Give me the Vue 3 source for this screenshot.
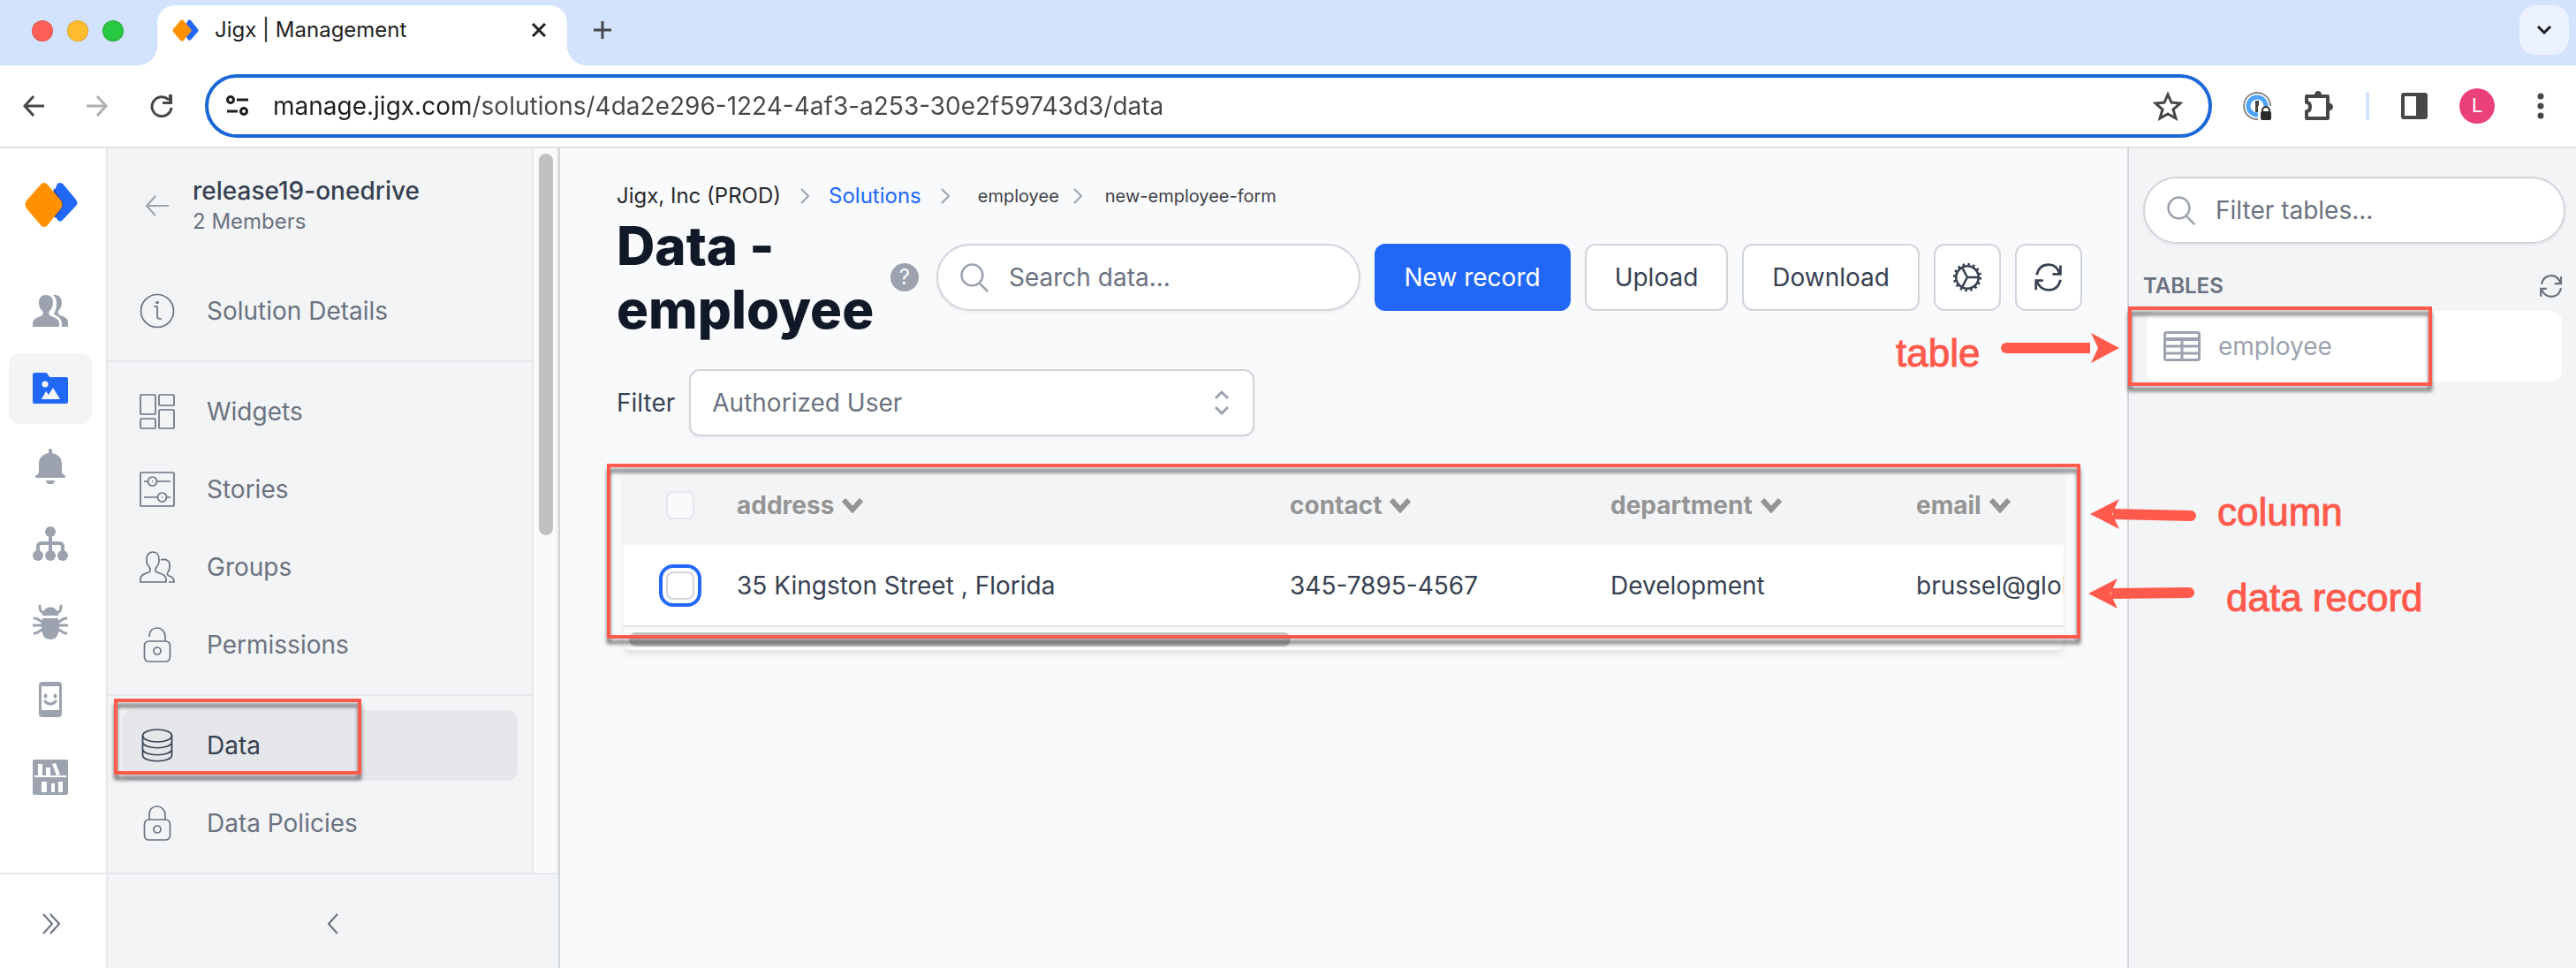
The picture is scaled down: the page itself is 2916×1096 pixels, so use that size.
<script setup>
import { ref } from 'vue'

const address = ref('manage.jigx.com/solutions/4da2e296-1224-4af3-a253-30e2f59743d3/data')
const search = ref('')
const tableFilter = ref('')
const userFilter = ref('Authorized User')

const art = {
  users:
    '<path d="M0 38v-3c0-5 3-7 9-9 3-1 3-4 2-6-3-2-4-6-4-10 0-5 3-8 8-8s8 3 8 8c0 4-1 8-4 10-1 2-1 5 2 6 6 2 9 4 9 9v3z"/><path d="M23 2c6-1 10 3 10 9 0 4-2 7-4 9-1 2 0 4 2 5 6 2 9 4 9 8v5h-7c0-8-1-10-9-14 0-2 3-5 3-12 0-4-1-8-4-10z"/>',
  folder:
    '<path d="M2 2h13c2 0 3 5 5 5h18a2 2 0 0 1 2 2v26a2 2 0 0 1-2 2H2a2 2 0 0 1-2-2V4a2 2 0 0 1 2-2z"/><g fill="#f3f4f6"><circle cx="14" cy="15" r="3.5"/><path d="M10 32l5-9 3 4 5-8 8 13z"/></g>',
  bell:
    '<path d="M18 2a2 2 0 0 1 4 0v3c7 1 11 6 11 12v8c0 3 1 4 3 5s1 3 0 3H4c-1 0-2-2 0-3s3-2 3-5v-8C7 11 11 6 18 5zM15 36h10c0 6-10 6-10 0z"/>',
  org:
    '<circle cx="20" cy="6" r="6"/><circle cx="6" cy="33" r="6"/><circle cx="20" cy="33" r="6"/><circle cx="34" cy="33" r="6"/><path fill="none" stroke="currentColor" stroke-width="4" d="M20 8v22M6 30v-7q0-4 4-4h20q4 0 4 4v7"/>',
  bug:
    '<path d="M11 11c2-10 16-10 18 0v2H11zM11 16h18c2 10 2 24-9 24s-11-14-9-24z"/><path fill="none" stroke="currentColor" stroke-width="3" stroke-linecap="round" d="M8 2c0 5 1 7 5 8M32 2c0 5-1 7-5 8M2 16c6 0 6 5 11 5M38 16c-6 0-6 5-11 5M1 24h38M2 33c6 0 5-4 11-5M38 33c-6 0-5-4-11-5"/>',
  phone:
    '<path fill-rule="evenodd" d="M11 0h18a4 4 0 0 1 4 4v32a4 4 0 0 1-4 4H11a4 4 0 0 1-4-4V4a4 4 0 0 1 4-4zM10 5v27h20V5z"/><ellipse cx="14.500" cy="16" rx="2" ry="2.500"/><ellipse cx="25.500" cy="16" rx="2" ry="2.500"/><path fill="none" stroke="currentColor" stroke-width="3" stroke-linecap="round" d="M14 22c3 4 9 4 12 0"/>',
  shelf:
    '<rect width="40" height="40" rx="2"/><g fill="#fff"><path d="M2 18h36v2H2zM6 5h5v13H6zM15 9h5v9h-5zM22 5l4-1 5 13-4 1zM10 25h6v12h-6zM21 27h4v10h-4zM29 25h5v12h-5z"/></g>',
  info:
    '<circle cx="20" cy="20" r="18.500"/><path d="M16 15h4v11q0 3 3 3h2M19 10h2v1h-2z"/>',
  widgets:
    '<rect x="1" y="1" width="17" height="22" rx="1"/><rect x="1" y="28" width="17" height="11" rx="1"/><rect x="22" y="1" width="17" height="12" rx="1"/><rect x="22" y="18" width="17" height="21" rx="1"/>',
  stories:
    '<rect x="1" y="1" width="38" height="38" rx="1"/><circle cx="14.500" cy="11" r="5"/><circle cx="25.500" cy="29" r="5"/><path d="M5 11h5M20 11h15M5 29h15M31 29h4"/><path d="M14 11h1M25 29h1"/>',
  groups:
    '<path d="M1 37v-3c0-5 4-6 9-8 3-1 2-4 1-6-3-3-3-5-3-9 0-5 3-8 7-8s7 3 7 8c0 4 0 6-3 9-1 2-2 5 1 6 5 2 10 3 10 8v3zM24 12c6-2 11 1 10 8 0 3-1 5-2 6-1 2-1 3 1 4 4 1 6 3 6 6v1h-6"/>',
  unlock:
    '<rect x="5.500" y="16" width="29" height="23" rx="5"/><circle cx="20" cy="27" r="4"/><path d="M11 11C11 4 15 1 20 1s9 4 9 10v5"/>',
  lock:
    '<rect x="5.500" y="16" width="29" height="23" rx="5"/><circle cx="20" cy="27" r="4"/><path d="M11 16v-5C11 4 15 1 20 1s9 4 9 10v5"/>',
  data:
    '<ellipse cx="20" cy="9" rx="16.500" ry="7"/><path d="M3.500 9v22c0 9 33 9 33 0V9M3.500 16c0 9 33 9 33 0M3.500 24c0 9 33 9 33 0"/>',
  refresh:
    '<path d="M4 16C6 7 12 3 19 3c7 0 12 4 14 12M34 4v11H24M34 22c-2 9-8 13-15 13C12 35 7 31 4 24M3 35V23h9"/>',
  gear:
    '<circle cx="20" cy="20" r="15"/><circle cx="20" cy="20" r="17.500" stroke-dasharray="3 3.870"/><path d="M20 20h14M20 20l-7-13M20 20l-7 13"/>',
  search: '<circle cx="17" cy="17" r="14"/><path d="M27 28l11 11"/>',
}

const rail = [
  { name: 'Users', icon: 'users' },
  { name: 'Solutions', icon: 'folder', active: true },
  { name: 'Notifications', icon: 'bell' },
  { name: 'Organization', icon: 'org' },
  { name: 'Debug', icon: 'bug' },
  { name: 'Devices', icon: 'phone' },
  { name: 'Library', icon: 'shelf' },
]

const sections = [
  [{ name: 'Solution Details', icon: 'info' }],
  [
    { name: 'Widgets', icon: 'widgets' },
    { name: 'Stories', icon: 'stories' },
    { name: 'Groups', icon: 'groups' },
    { name: 'Permissions', icon: 'unlock' },
  ],
  [
    { name: 'Data', icon: 'data', active: true },
    { name: 'Data Policies', icon: 'lock' },
  ],
]

const columns = ['address', 'contact', 'department', 'email']
const rows = [['35 Kingston Street , Florida', '345-7895-4567', 'Development', 'brussel@global.com']]
</script>

<template>
  <div class="window">
    <header class="tabstrip">
      <div class="lights"><i class="red"></i><i class="yellow"></i><i class="green"></i></div>
      <div class="tab">
        <svg class="favicon" viewBox="0 0 60 50" aria-hidden="true">
          <path fill="#2268f7" d="M36 2q3-3 6 0l16 20q2 3 0 6L42 46q-3 3-6 0L22 25z" />
          <path fill="#ff9000" d="M19 2q3-3 6 0l17 20q2 3 0 6L25 48q-3 3-6 0L2 28q-2-3 0-6z" />
        </svg>
        <span class="tab-title">Jigx | Management</span>
        <button class="bare" aria-label="Close tab">
          <svg width="16" height="16" viewBox="0 0 16 16"><path d="M1 1l14 14M15 1L1 15" stroke="#1f1f1f" stroke-width="3" /></svg>
        </button>
      </div>
      <button class="bare newtab" aria-label="New tab">
        <svg width="20" height="20" viewBox="0 0 20 20"><path d="M10 0v20M0 10h20" stroke="#474747" stroke-width="3" /></svg>
      </button>
      <button class="bare tabsearch" aria-label="Search tabs">
        <svg width="18" height="12" viewBox="0 0 18 12"><path d="M2 2l7 7 7-7" fill="none" stroke="#1f1f1f" stroke-width="3" /></svg>
      </button>
    </header>

    <div class="toolbar">
      <nav class="history">
        <button class="bare" aria-label="Back">
          <svg width="24" height="24" viewBox="0 0 24 24"><path d="M24 12H2M12 1L2 12l10 11" fill="none" stroke="#474747" stroke-width="3" /></svg>
        </button>
        <button class="bare" aria-label="Forward">
          <svg width="24" height="24" viewBox="0 0 24 24"><path d="M0 12h22M12 1l10 11-10 11" fill="none" stroke="#b0b0b0" stroke-width="3" /></svg>
        </button>
        <button class="bare" aria-label="Reload">
          <svg width="26" height="26" viewBox="0 0 26 26"><path d="M21 6A11 11 0 1 0 24 15" fill="none" stroke="#474747" stroke-width="3" /><path d="M25 0v11H14V8h7V0z" fill="#474747" /></svg>
        </button>
      </nav>
      <div class="omnibox">
        <svg width="26" height="24" viewBox="0 0 26 24" fill="none" stroke="#1f1f1f" stroke-width="3"><circle cx="5" cy="5" r="3.500" /><circle cx="20" cy="18" r="3.500" /><path d="M12 5h13M1 18h12" /></svg>
        <input v-model="address" aria-label="Address" />
        <button class="bare" aria-label="Bookmark">
          <svg width="34" height="34" viewBox="0 0 34 34"><path d="M17 4l4 9 10 1-8 7 3 10-9-5-9 5 3-10-8-7 10-1z" fill="none" stroke="#474747" stroke-width="3" /></svg>
        </button>
      </div>
      <div class="extensions">
        <button class="bare" aria-label="Password manager">
          <svg width="34" height="34" viewBox="0 0 34 34">
            <circle cx="17" cy="17" r="15" fill="#fff" stroke="#888" stroke-width="2" />
            <circle cx="17" cy="17" r="10" fill="#fff" stroke="#4ba3fb" stroke-width="5" />
            <path d="M15 11h4v13h-4z" fill="#444" />
            <path d="M18 17h16v17H18z" fill="#fff" />
            <path d="M23 24v-2a4 4 0 0 1 8 0v2" fill="none" stroke="#2b2b2b" stroke-width="2" />
            <rect x="21" y="23" width="12" height="10" rx="2" fill="#2b2b2b" />
          </svg>
        </button>
        <button class="bare" aria-label="Extensions">
          <svg width="34" height="36" viewBox="0 0 34 36"><path d="M27 14V7H3v7q4 0 4 5t-4 5v8h24v-8" fill="none" stroke="#474747" stroke-width="4" stroke-linejoin="round" /><path d="M12 6q0-5 4-5t4 5zM27 14q6 1 6 5t-6 5z" fill="#474747" /><path d="M27 12v14" stroke="#474747" stroke-width="4" /></svg>
        </button>
        <span class="rule"></span>
        <button class="bare" aria-label="Side panel">
          <svg width="30" height="30" viewBox="0 0 30 30"><rect x="2" y="2" width="26" height="26" rx="1" fill="none" stroke="#474747" stroke-width="4" /><path d="M17 1h12v28H17z" fill="#474747" /></svg>
        </button>
        <button class="avatar" aria-label="Profile">L</button>
        <button class="bare" aria-label="Menu">
          <svg width="8" height="30" viewBox="0 0 8 30" fill="#474747"><circle cx="4" cy="4" r="3.500" /><circle cx="4" cy="15" r="3.500" /><circle cx="4" cy="26" r="3.500" /></svg>
        </button>
      </div>
    </div>

    <div class="app">
      <aside class="rail">
        <a class="logo" href="#" aria-label="Home">
          <svg width="60" height="50" viewBox="0 0 60 50">
            <path fill="#2268f7" d="M37 1q3-2 6 0l15 18q3 4 0 7L43 42q-3 3-6 0L28 22z" />
            <path fill="#1b4fc4" d="M33 6l9 14q3 5 0 9l-7 11-6-6z" />
            <path fill="#ff9000" d="M19 1q3-2 6 0l16 19q3 5 0 9L25 49q-3 2-6 0L2 29q-3-4 0-9z" />
          </svg>
        </a>
        <nav>
          <a v-for="r in rail" :key="r.name" href="#" :class="{ active: r.active }" :aria-label="r.name">
            <svg width="40" height="40" viewBox="0 0 40 40" fill="currentColor" v-html="art[r.icon]"></svg>
          </a>
        </nav>
        <button class="bare collapse" aria-label="Expand">
          <svg width="20" height="24" viewBox="0 0 20 24"><path d="M1 1l10 11L1 23M9 1l10 11L9 23" fill="none" stroke="#6b7280" stroke-width="2" /></svg>
        </button>
      </aside>

      <aside class="sidebar">
        <div class="scrollarea">
          <div class="menu">
            <div class="solution">
              <a href="#" aria-label="Back to solutions">
                <svg width="28" height="24" viewBox="0 0 28 24"><path d="M27 12H2M12 1L2 12l10 11" fill="none" stroke="#9ca3af" stroke-width="2" /></svg>
              </a>
              <div>
                <strong>release19-onedrive</strong>
                <span>2 Members</span>
              </div>
            </div>
            <nav v-for="(s, i) in sections" :key="i">
              <a v-for="m in s" :key="m.name" href="#" :class="{ active: m.active }">
                <svg width="40" height="40" viewBox="0 0 40 40" fill="none" stroke="currentColor" stroke-width="1.700" v-html="art[m.icon]"></svg>
                {{ m.name }}
                <i v-if="m.active" class="mark mark-menu"></i>
              </a>
            </nav>
          </div>
          <div class="track"><i></i></div>
        </div>
        <button class="bare collapse" aria-label="Collapse">
          <svg width="12" height="24" viewBox="0 0 12 24"><path d="M11 1L1 12l10 11" fill="none" stroke="#6b7280" stroke-width="2" /></svg>
        </button>
      </aside>

      <main>
        <nav class="crumbs">
          <span>Jigx, Inc (PROD)</span>
          <svg width="10" height="18" viewBox="0 0 10 18"><path d="M1 1l8 8-8 8" /></svg>
          <a href="#">Solutions</a>
          <svg width="10" height="18" viewBox="0 0 10 18"><path d="M1 1l8 8-8 8" /></svg>
          <small class="first">employee</small>
          <svg class="tight" width="10" height="18" viewBox="0 0 10 18"><path d="M1 1l8 8-8 8" /></svg>
          <small>new-employee-form</small>
        </nav>

        <div class="heading">
          <h1>Data - employee</h1>
          <button class="help" aria-label="Help">?</button>
          <label class="pill search">
            <svg width="34" height="34" viewBox="0 0 40 40" v-html="art.search"></svg>
            <input v-model="search" placeholder="Search data..." aria-label="Search data" />
          </label>
          <button class="btn primary">New record</button>
          <button class="btn">Upload</button>
          <button class="btn">Download</button>
          <button class="btn square" aria-label="Settings">
            <svg width="34" height="34" viewBox="0 0 40 40" v-html="art.gear"></svg>
          </button>
          <button class="btn square" aria-label="Refresh">
            <svg width="34" height="34" viewBox="0 0 38 38" v-html="art.refresh"></svg>
          </button>
        </div>

        <div class="filter">
          <label for="user-filter">Filter</label>
          <div class="select">
            <select id="user-filter" v-model="userFilter">
              <option>Authorized User</option>
            </select>
            <svg width="18" height="28" viewBox="0 0 18 28"><path d="M2 9l7-7 7 7M2 19l7 7 7-7" fill="none" stroke="#9ca3af" stroke-width="3" /></svg>
          </div>
        </div>

        <div class="grid-wrap">
          <div class="grid">
            <table>
              <colgroup>
                <col class="c-check" /><col class="c-address" /><col class="c-contact" /><col class="c-department" /><col />
              </colgroup>
              <thead>
                <tr>
                  <th class="check"><input type="checkbox" class="dim" aria-label="Select all" /></th>
                  <th v-for="c in columns" :key="c">
                    <button class="bare sort">
                      {{ c }}
                      <svg width="26" height="18" viewBox="0 0 26 18"><path d="M3 3l10 11L23 3" fill="none" stroke="#949494" stroke-width="6" /></svg>
                    </button>
                  </th>
                </tr>
              </thead>
              <tbody>
                <tr v-for="r in rows" :key="r[0]">
                  <td class="check"><input type="checkbox" class="focused" aria-label="Select row" /></td>
                  <td v-for="v in r" :key="v">{{ v }}</td>
                </tr>
              </tbody>
            </table>
            <div class="hscroll"><i></i></div>
          </div>
          <i class="mark mark-grid"></i>
        </div>
      </main>

      <aside class="tables">
        <label class="pill">
          <svg width="34" height="34" viewBox="0 0 40 40" v-html="art.search"></svg>
          <input v-model="tableFilter" placeholder="Filter tables..." aria-label="Filter tables" />
        </label>
        <div class="tables-head">
          <h2>TABLES</h2>
          <button class="bare" aria-label="Reload tables">
            <svg width="28" height="28" viewBox="0 0 38 38" v-html="art.refresh"></svg>
          </button>
        </div>
        <a class="entry" href="#">
          <svg width="42" height="34" viewBox="0 0 42 34" fill="none" stroke="#9ca3af"><rect x="1.500" y="1.500" width="39" height="31" rx="2" stroke-width="3" /><path d="M1 9h40" stroke-width="4" /><path d="M1 17h40M1 25h40M21 9v24" stroke-width="3" /></svg>
          employee
          <i class="mark mark-entry"></i>
        </a>

        <span class="note n-table">table</span>
        <svg class="arrow a-table" width="134" height="36" viewBox="0 0 134 36"><path d="M6 12h95v12H6a6 6 0 0 1 0-12z" /><path d="M134 18l-32 17 8-17-8-17z" /></svg>
        <span class="note n-column">column</span>
        <svg class="arrow a-column" width="120" height="36" viewBox="0 0 120 36"><path d="M26 12l88 2a6 6 0 0 1 0 12l-88-2z" /><path d="M0 18L33 1l-8 17 8 17z" /></svg>
        <span class="note n-record">data record</span>
        <svg class="arrow a-record" width="120" height="36" viewBox="0 0 120 36"><path d="M26 12l88-1a6 6 0 0 1 0 12l-88 1z" /><path d="M0 18L33 1l-8 17 8 17z" /></svg>
      </aside>
    </div>
  </div>
</template>

<style>
body {
  margin: 0;
}
</style>

<style scoped>
.window {
  min-height: 100vh;
  display: flex;
  flex-direction: column;
  overflow: hidden;
  background: #fff;
  font-family: Inter, 'Liberation Sans', sans-serif;
  font-size: 28px;
  line-height: 40px;
  color: #374151;
}
*,
*::before,
*::after {
  box-sizing: border-box;
}
svg {
  display: block;
  flex: none;
}
a {
  color: inherit;
  text-decoration: none;
}
input,
select,
button {
  font: inherit;
  color: inherit;
}
.bare {
  padding: 0;
  border: 0;
  background: none;
  display: flex;
  align-items: center;
  justify-content: center;
}

/* browser chrome */
.tabstrip {
  height: 74px;
  flex: none;
  background: #d3e3fd;
  display: flex;
  padding: 6px 8px 0 36px;
}
.lights {
  display: flex;
  gap: 16px;
  padding-top: 17px;
  width: 142px;
}
.lights i {
  width: 24px;
  height: 24px;
  border-radius: 50%;
  border: 1px solid rgba(0, 0, 0, 0.12);
}
.red {
  background: #ff5f57;
}
.yellow {
  background: #febc2e;
}
.green {
  background: #28c840;
}
.tab {
  position: relative;
  width: 464px;
  display: flex;
  align-items: center;
  padding: 0 24px 12px 17px;
  background: #fff;
  border-radius: 20px 20px 0 0;
}
.tab::before,
.tab::after {
  content: '';
  position: absolute;
  bottom: 0;
  width: 22px;
  height: 22px;
}
.tab::before {
  right: 100%;
  background: radial-gradient(circle at 0 0, transparent 22px, #fff 22px);
}
.tab::after {
  left: 100%;
  background: radial-gradient(circle at 100% 0, transparent 22px, #fff 22px);
}
.favicon {
  width: 30px;
  height: 25px;
}
.tab-title {
  flex: 1;
  margin-left: 18px;
  font-size: 24px;
  color: #1f1f1f;
}
.newtab {
  margin: 0 auto 12px 30px;
}
.tabsearch {
  width: 56px;
  height: 56px;
  border-radius: 18px;
  background: #ebf1fe;
}
.toolbar {
  height: 94px;
  flex: none;
  display: flex;
  align-items: center;
  padding: 0 36px 0 26px;
  border-bottom: 2px solid #dfe1e0;
}
.history {
  display: flex;
  align-items: center;
  gap: 48px;
  width: 206px;
}
.omnibox {
  flex: 1;
  height: 72px;
  display: flex;
  align-items: center;
  border: 4px solid #1a67d6;
  border-radius: 36px;
  padding: 0 29px 0 20px;
}
.omnibox input {
  flex: 1;
  min-width: 0;
  border: 0;
  outline: 0;
  padding: 0;
  margin-left: 27px;
  height: 40px;
  color: transparent;
  background: linear-gradient(90deg, #1f1f1f 222px, #474747 222px);
  -webkit-background-clip: text;
  background-clip: text;
}
.extensions {
  display: flex;
  align-items: center;
  margin-left: 34px;
  gap: 36px;
}
.rule {
  width: 4px;
  height: 32px;
  border-radius: 2px;
  background: #d3e3fd;
}
.avatar {
  width: 40px;
  height: 40px;
  padding: 0;
  border: 0;
  border-radius: 50%;
  background: #ec407a;
  color: #fff;
  font: 22px/40px Roboto, sans-serif;
}
.extensions .avatar {
  margin-right: 12px;
}

/* page shell */
.app {
  flex: 1;
  display: flex;
  background: #f9fafc;
}
.rail {
  width: 122px;
  flex: none;
  display: flex;
  flex-direction: column;
  background: #fff;
  border-right: 2px solid #e5e7eb;
}
.logo {
  padding: 39px 0 0 28px;
  height: 144px;
}
.rail nav {
  flex: 1;
  display: flex;
  flex-direction: column;
  gap: 8px;
  padding: 0 16px 0 10px;
}
.rail nav a {
  height: 80px;
  display: flex;
  align-items: center;
  justify-content: center;
  border-radius: 12px;
  color: #9ca3af;
}
.rail nav a.active {
  background: #f3f4f6;
  color: #2268f7;
}
.collapse {
  height: 108px;
  width: 100%;
  border-top: 2px solid #e5e7eb;
  padding: 6px 4px 0 0;
}
.sidebar {
  width: 512px;
  flex: none;
  display: flex;
  flex-direction: column;
  background: #f3f4f6;
  border-right: 2px solid #d1d5db;
}
.sidebar .collapse {
  padding-right: 0;
}
.scrollarea {
  flex: 1;
  display: flex;
}
.menu {
  flex: 1;
}
.solution {
  height: 128px;
  display: flex;
  align-items: center;
  padding: 2px 0 0 42px;
  line-height: 36px;
}
.solution a {
  margin-right: 26px;
}
.solution strong,
.solution span {
  display: block;
}
.solution strong {
  font-weight: 500;
}
.solution span {
  font-size: 24px;
  line-height: 34px;
  color: #6b7280;
}
.menu nav {
  padding: 16px;
  display: flex;
  flex-direction: column;
  gap: 8px;
}
.menu nav + nav {
  border-top: 2px solid #e5e7eb;
}
.menu nav a {
  position: relative;
  height: 80px;
  display: flex;
  align-items: center;
  gap: 36px;
  padding-left: 20px;
  border-radius: 12px;
  color: #6b7280;
}
.menu nav a.active {
  background: #e5e7eb;
  color: #374151;
}
.track {
  width: 30px;
  background: #fafafa;
  border-left: 2px solid #e8e8e8;
  border-right: 2px solid #ededed;
  padding: 6px 0 0 6px;
}
.track i {
  display: block;
  width: 16px;
  height: 432px;
  border-radius: 8px;
  background: #c1c1c1;
}

/* main column */
main {
  flex: 1;
  min-width: 0;
  padding: 32px 51px 0 64px;
}
.crumbs {
  display: flex;
  align-items: center;
  height: 42px;
  padding-top: 2px;
  font-size: 24px;
  color: #27272a;
}
.crumbs a {
  color: #2268f7;
}
.crumbs svg {
  margin: 0 22px;
  fill: none;
  stroke: #9ca3af;
  stroke-width: 2;
}
.crumbs small {
  font-size: 20px;
  color: #3f3f46;
}
.crumbs .first {
  margin-left: 10px;
}
.crumbs .tight {
  margin: 0 26px 0 16px;
}
.heading {
  display: flex;
  align-items: center;
  gap: 16px;
}
h1 {
  flex: none;
  margin: 0;
  width: 294px;
  font-size: 60px;
  line-height: 72px;
  font-weight: 800;
  color: #111827;
}
.help {
  flex: none;
  width: 32px;
  height: 32px;
  margin-right: 4px;
  padding: 0;
  border: 0;
  border-radius: 50%;
  background: #9ca3af;
  color: #f9fafc;
  font-size: 24px;
  line-height: 32px;
}
.pill {
  height: 76px;
  display: flex;
  align-items: center;
  gap: 22px;
  padding: 0 24px;
  background: #fff;
  border: 2px solid #d1d5db;
  border-radius: 38px;
  box-shadow: 0 2px 4px rgba(0, 0, 0, 0.05);
}
.pill svg {
  fill: none;
  stroke: #9ca3af;
  stroke-width: 3;
}
.pill input {
  flex: 1;
  min-width: 0;
  border: 0;
  outline: 0;
  padding: 0;
  background: none;
}
.pill input::placeholder {
  color: #6b7280;
  opacity: 1;
}
.search {
  flex: 1;
  min-width: 0;
}
.btn {
  height: 76px;
  flex: none;
  padding: 0 32px;
  background: #fff;
  border: 2px solid #d1d5db;
  border-radius: 12px;
}
.btn.primary {
  background: #2268f7;
  border-color: #2268f7;
  color: #fff;
}
.btn.square {
  width: 76px;
  padding: 0 19px;
}
.btn svg {
  fill: none;
  stroke: #374151;
  stroke-width: 3;
}
.filter {
  display: flex;
  align-items: center;
  gap: 16px;
  margin-top: 32px;
}
.select {
  position: relative;
  width: 640px;
}
.select select {
  display: block;
  width: 100%;
  height: 76px;
  padding: 0 24px;
  appearance: none;
  background: #fff;
  border: 2px solid #d1d5db;
  border-radius: 12px;
  box-shadow: 0 2px 4px rgba(0, 0, 0, 0.05);
  color: #6b7280;
}
.select svg {
  position: absolute;
  right: 28px;
  top: 24px;
  pointer-events: none;
}
.grid-wrap {
  position: relative;
  margin: 34px 21px 0 8px;
}
.grid {
  overflow: hidden;
  background: #fafafa;
  border-bottom: 2px solid #e8e8e8;
  border-radius: 12px 12px 8px 8px;
  box-shadow: 0 4px 6px rgba(0, 0, 0, 0.08);
}
table {
  width: 100%;
  table-layout: fixed;
  border-collapse: separate;
  border-spacing: 0;
}
.c-check {
  width: 96px;
}
.c-address {
  width: 626px;
}
.c-contact {
  width: 363px;
}
.c-department {
  width: 346px;
}
th,
td {
  text-align: left;
  white-space: nowrap;
  padding: 0 0 0 32px;
}
th {
  height: 90px;
  background: #f3f4f6;
  border-bottom: 2px solid #f9fafb;
}
td {
  height: 92px;
  background: #fff;
  border-bottom: 2px solid #e5e7eb;
}
.sort {
  gap: 8px;
  font-weight: 700;
  color: #949494;
}
.check {
  padding-left: 48px;
}
.check input {
  display: block;
  appearance: none;
  width: 32px;
  height: 32px;
  margin: 0;
  background: #fff;
  border: 2px solid #d1d5db;
  border-radius: 8px;
}
.check .dim {
  background: #f9fafb;
  border-color: #e5e7eb;
}
.check .focused {
  box-shadow: 0 0 0 4px #fff, 0 0 0 8px #2268f7;
}
.hscroll {
  height: 26px;
  padding: 6px;
}
.hscroll i {
  display: block;
  width: calc(46% + 5px);
  height: 16px;
  border-radius: 8px;
  background: #c1c1c1;
}

/* tables panel */
.tables {
  position: relative;
  width: 508px;
  flex: none;
  padding: 32px 12px 0 16px;
  background: #f3f4f6;
  border-left: 2px solid #d1d5db;
}
.tables-head {
  display: flex;
  align-items: center;
  justify-content: space-between;
  padding: 28px 2px 8px 0;
}
h2 {
  margin: 0;
  font-size: 24px;
  font-weight: 600;
  color: #6b7280;
}
.tables-head svg {
  fill: none;
  stroke: #6b7280;
  stroke-width: 3;
}
.entry {
  position: relative;
  height: 80px;
  margin: 0 4px;
  padding-left: 19px;
  display: flex;
  align-items: center;
  gap: 20px;
  border-radius: 12px;
  background: #fff;
  color: #9ca3af;
}

/* annotations */
.mark {
  position: absolute;
  border: 4px solid #ff5a4c;
  filter: drop-shadow(0 6px 2px rgba(0, 0, 0, 0.55));
  pointer-events: none;
}
.mark-menu {
  left: -9px;
  top: -13px;
  width: 280px;
  height: 86px;
}
.mark-grid {
  inset: -3px -19px 15px -19px;
}
.mark-entry {
  left: -21px;
  top: -5px;
  width: 344px;
  height: 90px;
}
.note,
.arrow {
  position: absolute;
}
.note {
  font: 44px/52px 'Liberation Sans', sans-serif;
  white-space: nowrap;
  color: #ff5a4c;
  -webkit-text-stroke: 1px #ff5a4c;
}
.arrow {
  fill: #ff5a4c;
}
.n-table {
  left: -264px;
  top: 206px;
}
.a-table {
  left: -145px;
  top: 208px;
}
.n-column {
  left: 100px;
  top: 386px;
}
.a-column {
  left: -44px;
  top: 396px;
}
.n-record {
  left: 110px;
  top: 483px;
}
.a-record {
  left: -46px;
  top: 486px;
}
</style>
